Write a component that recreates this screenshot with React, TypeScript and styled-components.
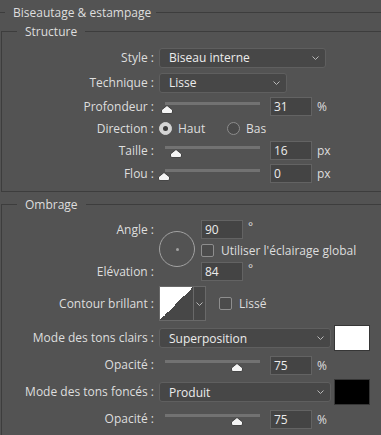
import React from "react";
import styled, { createGlobalStyle } from "styled-components";

const LINE = "#3d3d3d";
const TEXT = "#dedede";

const Global = createGlobalStyle`
  * { box-sizing: border-box; }
  html, body { margin: 0; padding: 0; background: #535353; }
  body {
    width: 381px;
    height: 435px;
    overflow: hidden;
    font-family: "Open Sans", "Noto Sans", sans-serif;
    font-size: 12px;
    color: ${TEXT};
  }
`;

const Page = styled.div`
  width: 381px;
  height: 435px;
  overflow: hidden;
  padding-left: 1px;
`;

const Header = styled.div`
  display: flex;
  align-items: center;
  height: 25px;
  margin-left: -1px;
  &::before {
    content: "";
    width: 5px;
    height: 1px;
    background: ${LINE};
  }
  &::after {
    content: "";
    flex: 1;
    height: 1px;
    background: ${LINE};
  }
`;

const HeaderText = styled.span`
  padding: 0 5px 0 8px;
  line-height: 14px;
  white-space: nowrap;
`;

const Group = styled.fieldset<{ $mt?: number }>`
  margin: ${(p) => p.$mt ?? 0}px 0 0 0;
  padding: 7px 0 6px 0;
  border: 1px solid ${LINE};
  border-right: none;
  min-width: 0;
`;

const Legend = styled.legend`
  margin-left: 15px;
  padding: 0 8px;
  height: 13px;
  line-height: 13px;
  white-space: nowrap;
`;

const Row = styled.div<{ $h: number; $mt?: number }>`
  display: flex;
  align-items: center;
  height: ${(p) => p.$h}px;
  margin-top: ${(p) => p.$mt ?? 0}px;
`;

const Label = styled.div`
  flex: 0 0 152px;
  text-align: right;
  white-space: nowrap;
  line-height: 14px;
`;

const Controls = styled.div`
  display: flex;
  align-items: center;
  margin-left: 5px;
`;

const Select = styled.div<{ $w: number }>`
  width: ${(p) => p.$w}px;
  height: 20px;
  border: 1px solid #5f5f5f;
  border-radius: 3px;
  background: #474747;
  display: flex;
  align-items: center;
  justify-content: space-between;
  padding: 0 6px 0 9px;
  color: #ececec;
  white-space: nowrap;
`;

const Chevron = () => (
  <svg width="7" height="4" viewBox="0 0 7 4">
    <polyline points="0.5,0.5 3.5,3.5 6.5,0.5" fill="none" stroke="#b8b8b8" strokeWidth="1" />
  </svg>
);

const NumBox = styled.div`
  width: 42px;
  height: 19px;
  border: 1px solid #636363;
  background: #444444;
  padding-left: 3px;
  display: flex;
  align-items: center;
  color: #ececec;
`;

const Unit = styled.span`
  margin-left: 5px;
`;

const Degree = styled.span`
  margin-left: 5px;
  align-self: flex-start;
  line-height: 12px;
  margin-top: 1px;
`;

const SliderBox = styled.div`
  position: relative;
  width: 95px;
  height: 14px;
  margin-left: 6px;
  margin-right: 10px;
`;

const Track = styled.div`
  margin-top: 2px;
  height: 3px;
  background: #727272;
`;

const ThumbWrap = styled.div`
  position: absolute;
  top: 5px;
  width: 12px;
  height: 9px;
  margin-left: -6px;
  display: flex;
`;

const Thumb = () => (
  <svg width="12" height="9" viewBox="0 0 12 9">
    <path
      d="M6 0.5 L11.5 5 L11.5 7 Q11.5 8.5 10 8.5 L2 8.5 Q0.5 8.5 0.5 7 L0.5 5 Z"
      fill="#f4f4f4"
      stroke="#2f2f2f"
      strokeWidth="0.8"
    />
  </svg>
);

const Slider = ({ pos }: { pos: number }) => (
  <SliderBox>
    <Track />
    <ThumbWrap style={{ left: `${pos}px` }}>
      <Thumb />
    </ThumbWrap>
  </SliderBox>
);

const RadioOption = styled.div<{ $w?: number }>`
  display: flex;
  align-items: center;
  width: ${(p) => (p.$w ? `${p.$w}px` : "auto")};
`;

const RadioDot = styled.span<{ $on?: boolean }>`
  width: 13px;
  height: 13px;
  border-radius: 50%;
  border: 1px solid ${(p) => (p.$on ? "#d4d4d4" : "#8c8c8c")};
  background: ${(p) => (p.$on ? "#d4d4d4" : "#4a4a4a")};
  display: flex;
  align-items: center;
  justify-content: center;
  &::after {
    content: "";
    display: ${(p) => (p.$on ? "block" : "none")};
    width: 5px;
    height: 5px;
    border-radius: 50%;
    background: #3a3a3a;
  }
`;

const OptText = styled.span<{ $gap?: number }>`
  margin-left: ${(p) => p.$gap ?? 6}px;
  white-space: nowrap;
`;

const Check = styled.span<{ $ml?: number }>`
  width: 13px;
  height: 13px;
  border: 1px solid #8e8e8e;
  border-radius: 2px;
  background: #4b4b4b;
  margin-left: ${(p) => p.$ml ?? 0}px;
  flex: 0 0 auto;
`;

const AngleGrid = styled.div`
  display: grid;
  grid-template-columns: 152px 47px auto;
  grid-template-rows: 19px 23px 19px;
  margin-top: 2px;
`;

const GridLabel = styled(Label)<{ $row: number }>`
  grid-column: 1;
  grid-row: ${(p) => p.$row};
  align-self: center;
`;

const Dial = styled.div`
  grid-column: 2;
  grid-row: 1 / 4;
  align-self: start;
  margin: 11px 0 0 5px;
  width: 36px;
  height: 36px;
  border: 1px solid #a2a2a2;
  border-radius: 50%;
  display: flex;
  align-items: center;
  justify-content: center;
  &::after {
    content: "";
    width: 3px;
    height: 3px;
    border-radius: 50%;
    background: #a2a2a2;
  }
`;

const GridCell = styled.div<{ $row: number }>`
  grid-column: 3;
  grid-row: ${(p) => p.$row};
  display: flex;
  align-items: center;
`;

const Contour = styled.div`
  display: flex;
  width: 47px;
  height: 35px;
  border: 1px solid #696969;
`;

const ContourThumb = styled.div`
  width: 34px;
  height: 100%;
  border-right: 1px solid #696969;
  background: linear-gradient(to bottom right, #ffffff 50%, #474747 50%);
`;

const ContourArrow = styled.div`
  flex: 1;
  display: flex;
  align-items: center;
  justify-content: center;
  background: #474747;
`;

const Swatch = styled.div<{ $color: string }>`
  width: 36px;
  height: 26px;
  margin-left: 3px;
  background: ${(p) => p.$color};
  border: 1px solid #363636;
`;

const sliders = {
  profondeur: 2,
  taille: 11,
  flou: -1,
  opacite: 72,
};

export default function App() {
  return (
    <>
      <Global />
      <Page>
        <Header>
          <HeaderText>Biseautage &amp; estampage</HeaderText>
        </Header>

        <Group>
          <Legend>Structure</Legend>
          <Row $h={25}>
            <Label>Style :</Label>
            <Controls>
              <Select $w={167}>
                <span>Biseau interne</span>
                <Chevron />
              </Select>
            </Controls>
          </Row>
          <Row $h={25}>
            <Label>Technique :</Label>
            <Controls>
              <Select $w={128}>
                <span>Lisse</span>
                <Chevron />
              </Select>
            </Controls>
          </Row>
          <Row $h={23}>
            <Label>Profondeur :</Label>
            <Controls>
              <Slider pos={sliders.profondeur} />
              <NumBox>31</NumBox>
              <Unit>%</Unit>
            </Controls>
          </Row>
          <Row $h={21}>
            <Label>Direction :</Label>
            <Controls>
              <RadioOption $w={68}>
                <RadioDot $on />
                <OptText>Haut</OptText>
              </RadioOption>
              <RadioOption>
                <RadioDot />
                <OptText>Bas</OptText>
              </RadioOption>
            </Controls>
          </Row>
          <Row $h={23}>
            <Label>Taille :</Label>
            <Controls>
              <Slider pos={sliders.taille} />
              <NumBox>16</NumBox>
              <Unit>px</Unit>
            </Controls>
          </Row>
          <Row $h={23}>
            <Label>Flou :</Label>
            <Controls>
              <Slider pos={sliders.flou} />
              <NumBox>0</NumBox>
              <Unit>px</Unit>
            </Controls>
          </Row>
        </Group>

        <Group $mt={6}>
          <Legend>Ombrage</Legend>
          <AngleGrid>
            <GridLabel $row={1}>Angle :</GridLabel>
            <GridLabel $row={3}>Elévation :</GridLabel>
            <Dial />
            <GridCell $row={1}>
              <NumBox>90</NumBox>
              <Degree>°</Degree>
            </GridCell>
            <GridCell $row={2}>
              <Check />
              <OptText $gap={7}>Utiliser l'éclairage global</OptText>
            </GridCell>
            <GridCell $row={3}>
              <NumBox>84</NumBox>
              <Degree>°</Degree>
            </GridCell>
          </AngleGrid>
          <Row $h={35} $mt={5}>
            <Label>Contour brillant :</Label>
            <Controls>
              <Contour>
                <ContourThumb />
                <ContourArrow>
                  <Chevron />
                </ContourArrow>
              </Contour>
              <Check $ml={13} />
              <OptText $gap={7}>Lissé</OptText>
            </Controls>
          </Row>
          <Row $h={26} $mt={4}>
            <Label>Mode des tons clairs :</Label>
            <Controls>
              <Select $w={172}>
                <span>Superposition</span>
                <Chevron />
              </Select>
              <Swatch $color="#ffffff" />
            </Controls>
          </Row>
          <Row $h={28}>
            <Label>Opacité :</Label>
            <Controls>
              <Slider pos={sliders.opacite} />
              <NumBox>75</NumBox>
              <Unit>%</Unit>
            </Controls>
          </Row>
          <Row $h={26}>
            <Label>Mode des tons foncés :</Label>
            <Controls>
              <Select $w={172}>
                <span>Produit</span>
                <Chevron />
              </Select>
              <Swatch $color="#000000" />
            </Controls>
          </Row>
          <Row $h={28}>
            <Label>Opacité :</Label>
            <Controls>
              <Slider pos={sliders.opacite} />
              <NumBox>75</NumBox>
              <Unit>%</Unit>
            </Controls>
          </Row>
        </Group>
      </Page>
    </>
  );
}
